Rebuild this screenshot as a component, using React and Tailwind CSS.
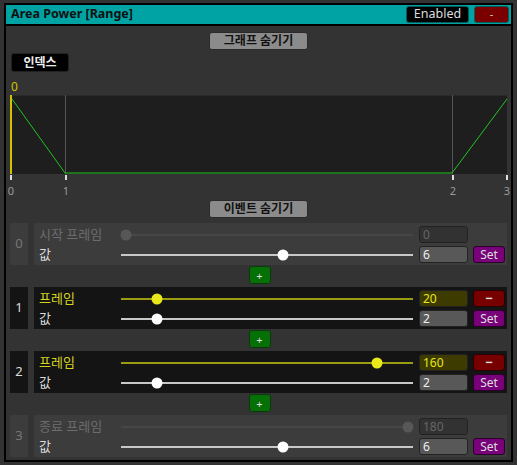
import React from 'react';

const FONT = { fontFamily: '"Noto Sans", "Noto Sans CJK KR", sans-serif' };

// frame range 0..180, value range 1..10
const events = [
  { idx: 0, label: '시작 프레임', frame: 0, value: 6, pct: 0, vpct: (6 - 1) / 9, disabled: true },
  { idx: 1, label: '프레임', frame: 20, value: 2, pct: 20 / 180, vpct: (2 - 1) / 9 },
  { idx: 2, label: '프레임', frame: 160, value: 2, pct: 160 / 180, vpct: (2 - 1) / 9 },
  { idx: 3, label: '종료 프레임', frame: 180, value: 6, pct: 1, vpct: (6 - 1) / 9, disabled: true },
];

const Slider = ({ pct, track, knob }) => (
  <div className="relative h-full flex-1">
    <div className={`absolute left-0 right-0 top-1/2 h-[2px] -translate-y-1/2 ${track}`} />
    <div
      className={`absolute top-1/2 h-[11px] w-[11px] -translate-x-1/2 -translate-y-1/2 rounded-full ${knob}`}
      style={{ left: `calc(5px + (100% - 10px) * ${pct})` }}
    />
  </div>
);

const PlusRow = () => (
  <div className="mt-[1px] mb-[3px] flex justify-center">
    <div className="ml-[2px] flex h-[18px] w-[22px] items-center justify-center rounded-[3px] border border-[#0a3a0a] bg-[#067006] text-[11px] leading-none text-[#ddd]">
      +
    </div>
  </div>
);

const EventRow = ({ e }) => {
  const off = e.disabled;
  const rowBg = off ? 'bg-[#3c3c3c]' : 'bg-[#141414]';
  return (
    <div className="flex h-[42px] gap-[6px]">
      <div className={`flex w-[18px] items-center justify-center text-[13px] ${rowBg} ${off ? 'text-[#777]' : 'text-[#ddd]'}`}>
        {e.idx}
      </div>
      <div className={`flex flex-1 flex-col gap-[3px] pt-[3px] pl-[5px] pr-[2px] ${rowBg}`}>
        <div className="flex h-[17px] items-center">
          <div className={`w-[82px] text-[13px] ${off ? 'text-[#6c6c6c]' : 'text-[#d6d61c]'}`}>{e.label}</div>
          {off ? (
            <Slider pct={e.pct} track="bg-[#474747]" knob="bg-[#575757]" />
          ) : (
            <Slider pct={e.pct} track="bg-[#9c9c12]" knob="bg-[#e8e81a]" />
          )}
          <div
            className={`ml-[6px] flex h-[17px] w-[49px] items-center rounded-[3px] border px-[3px] text-[12px] ${
              off ? 'border-[#222] bg-[#323232] text-[#666]' : 'border-[#222] bg-[#3e3b00] text-[#e8e81a]'
            }`}
          >
            {e.frame}
          </div>
          {off ? (
            <div className="ml-[5px] w-[32px]" />
          ) : (
            <div className="ml-[5px] flex h-[17px] w-[32px] items-center justify-center rounded-[3px] border border-[#2a0000] bg-[#760000] text-[13px] font-bold leading-none text-[#ddd]">
              −
            </div>
          )}
        </div>
        <div className="flex h-[17px] items-center">
          <div className="w-[82px] text-[13px] text-[#ddd]">값</div>
          <Slider pct={e.vpct} track="bg-[#c8c8c8]" knob="bg-white" />
          <div className="ml-[6px] flex h-[17px] w-[49px] items-center rounded-[3px] border border-[#222] bg-[#585858] px-[3px] text-[12px] text-[#eee]">
            {e.value}
          </div>
          <div className="ml-[5px] flex h-[17px] w-[32px] items-center justify-center rounded-[3px] border border-[#2a002a] bg-[#780078] text-[12px] text-[#ddd]">
            Set
          </div>
        </div>
      </div>
    </div>
  );
};

const Graph = () => (
  <svg width="497" height="105" className="block overflow-visible">
    <rect x="0" y="0" width="497" height="79" fill="#1e1e1e" />
    <line x1="0" y1="0.5" x2="497" y2="0.5" stroke="#2a2a2a" />
    <line x1="55.5" y1="0" x2="55.5" y2="79" stroke="#555" />
    <line x1="442.5" y1="0" x2="442.5" y2="79" stroke="#555" />
    <rect x="0" y="0" width="2" height="79" fill="#d4c400" />
    <polyline points="2,4 55,78 442,78 497,4" fill="none" stroke="#1fc71f" strokeWidth="1" />
    {[0, 55, 442, 496].map((x) => (
      <rect key={x} x={x} y="80" width="2" height="5" fill="#ddd" />
    ))}
    {[
      [1, '0'],
      [56, '1'],
      [443, '2'],
      [497, '3'],
    ].map(([x, t]) => (
      <text key={t} x={x} y="100" textAnchor="middle" fontSize="11" fill="#9a9a9a" style={FONT}>
        {t}
      </text>
    ))}
  </svg>
);

const GrayButton = ({ children }) => (
  <div className="flex justify-center">
    <div className="flex h-[18px] w-[99px] items-center justify-center rounded-[3px] border border-[#2a2a2a] bg-[#8b8b8b] text-[12px] font-bold text-[#111]">
      {children}
    </div>
  </div>
);

export default function App() {
  return (
    <div className="h-[465px] w-[517px] bg-[#333] pt-[3px] pl-[4px]" style={FONT}>
      <div className="h-[459px] w-[509px] overflow-hidden border-2 border-black bg-[#333]">
        <div className="flex h-[21px] items-center border-b-2 border-black bg-[#00a3a3] pl-[5px] pr-[2px]">
          <div className="flex-1 text-[12.5px] font-bold text-[#111]">Area Power [Range]</div>
          <div className="flex h-[17px] w-[63px] items-center justify-center rounded-[3px] border border-[#0b5a5a] bg-black text-[12.5px] text-[#ddd]">
            Enabled
          </div>
          <div className="ml-[5px] flex h-[17px] w-[35px] items-center justify-center rounded-[3px] border border-[#0b5a5a] bg-[#7a0000] text-[11px] text-[#ccc]">
            -
          </div>
        </div>
        <div className="px-[4px] pt-[6px]">
          <GrayButton>그래프 숨기기</GrayButton>
          <div className="mt-[3px] ml-[1px] flex h-[19px] w-[58px] items-center justify-center rounded-[3px] border border-[#222] bg-black text-[12px] font-bold text-[#eee]">
            인덱스
          </div>
          <div className="mt-[6px] h-[17px] pl-[1px] text-[12px] leading-[17px] text-[#d4c400]">0</div>
          <Graph />
          <GrayButton>이벤트 숨기기</GrayButton>
          <div className="mt-[5px]">
            {events.map((e, i) => (
              <React.Fragment key={e.idx}>
                <EventRow e={e} />
                {i < events.length - 1 && <PlusRow />}
              </React.Fragment>
            ))}
          </div>
        </div>
      </div>
    </div>
  );
}
